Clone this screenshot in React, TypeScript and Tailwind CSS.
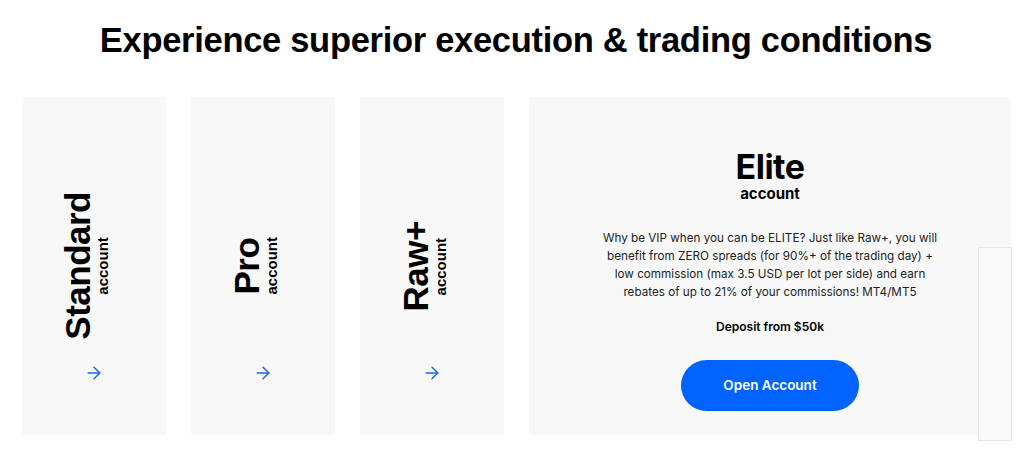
import { ArrowRight } from "lucide-react";

const accounts = ["Standard", "Pro", "Raw+"];

function SideCard({ name }: { name: string }) {
  return (
    <div className="w-[144px] h-[338px] bg-[#f8f8f8] grid grid-rows-[1fr_auto_1fr] justify-items-center">
      <div />
      <div className="mr-[18px] [writing-mode:vertical-rl] rotate-180 text-center text-black font-['Liberation_Sans',Arial,sans-serif] font-bold">
        <div className="text-[35px] leading-[36px] tracking-[-0.5px]">{name}</div>
        <div className="text-[15px] leading-[14px]">account</div>
      </div>
      <div className="flex items-end pb-[52px]">
        <ArrowRight size={20} strokeWidth={1.75} className="text-[#1a66f0]" />
      </div>
    </div>
  );
}

export default function App() {
  return (
    <div className="relative w-[1024px] h-[459px] bg-white overflow-hidden font-['Inter',sans-serif]">
      <h1 className="pt-[18px] pl-[8px] text-center text-[34.5px] leading-[44px] font-bold text-black font-['Liberation_Sans',Arial,sans-serif] tracking-[-0.3px]">
        Experience superior execution &amp; trading conditions
      </h1>

      <div className="mt-[35px] pl-[22px] flex gap-[25px]">
        {accounts.map((a) => (
          <SideCard key={a} name={a} />
        ))}

        <div className="w-[482px] h-[338px] bg-[#f8f8f8] flex flex-col items-center pt-[53px]">
          <div className="text-[34px] leading-[33px] font-bold text-black tracking-[-0.5px]">Elite</div>
          <div className="mt-[2px] text-[15px] leading-[18px] font-bold text-black">account</div>
          <p className="mt-[26px] w-[345px] text-center text-[11.7px] leading-[18px] text-[#222]">
            Why be VIP when you can be ELITE? Just like Raw+, you will benefit from ZERO spreads (for 90%+ of the trading day) + low commission (max 3.5 USD per lot per side) and earn rebates of up to 21% of your commissions! MT4/MT5
          </p>
          <div className="mt-[17px] text-[12px] leading-[18px] font-semibold text-black">Deposit from $50k</div>
          <button className="mt-[24px] w-[178px] h-[51px] rounded-full bg-[#0063ff] text-white text-[13.5px] font-semibold">
            Open Account
          </button>
        </div>
      </div>

      <div className="absolute left-[978px] top-[247px] w-[34px] h-[194px] border border-[#e6e6e6] bg-[#f9f9f9]" />
    </div>
  );
}
